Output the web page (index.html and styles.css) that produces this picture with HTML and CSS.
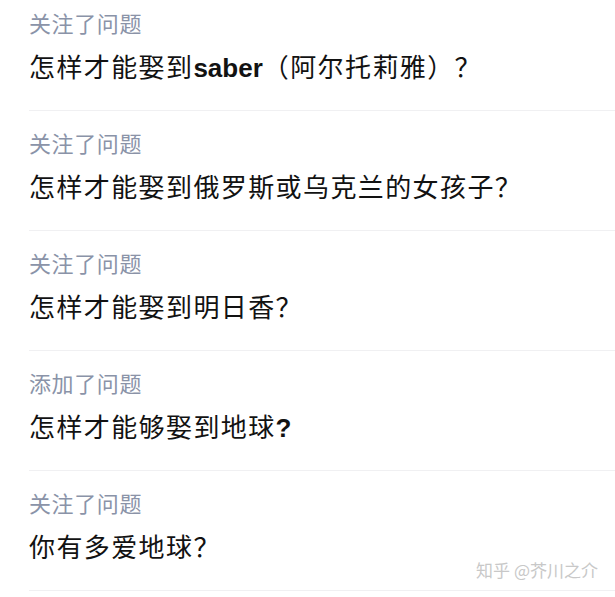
FILE: index.html
```html
<!DOCTYPE html>
<html lang="zh-CN">
<head>
  <meta charset="UTF-8" />
  <meta name="viewport" content="width=device-width, initial-scale=1" />
  <title>动态</title>
  <link rel="stylesheet" href="styles.css">
</head>
<body>
  <div class="feed">
    <div class="feed-item">
      <div class="feed-label">关注了问题</div>
      <div class="feed-title">怎样才能娶到<span class="latin">saber</span>（阿尔托莉雅）？</div>
    </div>

    <div class="feed-item">
      <div class="feed-label">关注了问题</div>
      <div class="feed-title">怎样才能娶到俄罗斯或乌克兰的女孩子？</div>
    </div>

    <div class="feed-item">
      <div class="feed-label">关注了问题</div>
      <div class="feed-title">怎样才能娶到明日香？</div>
    </div>

    <div class="feed-item">
      <div class="feed-label">添加了问题</div>
      <div class="feed-title">怎样才能够娶到地球<span class="latin">?</span></div>
    </div>

    <div class="feed-item">
      <div class="feed-label">关注了问题</div>
      <div class="feed-title">你有多爱地球？</div>
    </div>
  </div>

  <div class="watermark">知乎 @芥川之介</div>
</body>
</html>
```

FILE: styles.css
```css
body {
  margin: 0;
  background: #fff;
  font-family: "Noto Sans CJK SC", "Liberation Sans", sans-serif;
  color: #121212;
  position: relative;
  min-height: 597px;
  overflow: hidden;
}
.feed {
  padding-left: 29px;
}
.feed-item {
  padding: 15px 0 26px;
  border-bottom: 1px solid #f0f0f2;
}
.feed-item:first-child {
  padding-top: 6px;
}
.feed-label {
  font-size: 22px;
  line-height: 32px;
  color: #8a93a8;
  letter-spacing: 0.6px;
}
.feed-title {
  margin-top: 10px;
  font-size: 26px;
  line-height: 36px;
  font-weight: 400;
  letter-spacing: 1.4px;
}
.latin {
  font-family: "Liberation Sans", sans-serif;
  font-weight: bold;
  letter-spacing: 0;
  line-height: 1;
}
.watermark {
  position: absolute;
  right: 17px;
  top: 558px;
  font-size: 17px;
  line-height: 24px;
  color: #c8c8c8;
  text-shadow: 0 0 1px #fff;
}
```
